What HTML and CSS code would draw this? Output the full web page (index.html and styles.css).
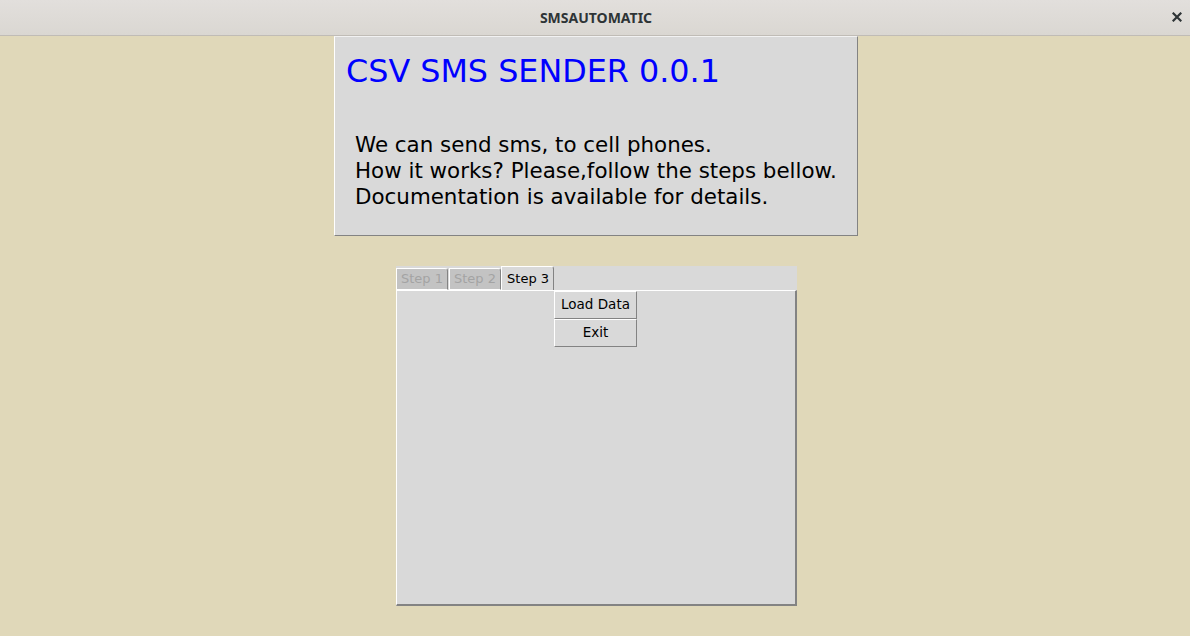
FILE: index.html
```html
<!DOCTYPE html>
<html>
<head>
<meta charset="utf-8">
<link rel="stylesheet" href="styles.css">
</head>
<body>
<div class="titlebar">
  <span class="title">SMSAUTOMATIC</span>
  <span class="close">
    <svg width="10" height="10" viewBox="0 0 10 10"><path d="M1.5 1.5 L8.5 8.5 M8.5 1.5 L1.5 8.5" stroke="#2e3436" stroke-width="2.2" stroke-linecap="square"/></svg>
  </span>
</div>
<div class="main">
  <div class="header">
    <div class="app-title">CSV SMS SENDER 0.0.1</div>
    <div class="desc">
      <div>We can send sms, to cell phones.</div>
      <div>How it works? Please,follow the steps bellow.</div>
      <div>Documentation is available for details.</div>
    </div>
  </div>
  <div class="notebook">
    <div class="tabs">
      <div class="tab disabled">Step 1</div>
      <div class="tab disabled">Step 2</div>
      <div class="tab selected">Step 3</div>
    </div>
    <div class="pane">
      <button class="btn">Load Data</button>
      <button class="btn">Exit</button>
    </div>
  </div>
</div>
</body>
</html>
```

FILE: styles.css
```css
html, body {
  margin: 0;
  padding: 0;
}
body {
  width: 1190px;
  height: 636px;
  background: #e0d8b9;
  font-family: "DejaVu Sans", sans-serif;
  overflow: hidden;
}
.titlebar {
  height: 35px;
  border-bottom: 1px solid #c0bcb6;
  background: linear-gradient(#e2dfdc, #dad7d2);
  display: flex;
  align-items: center;
  justify-content: center;
  position: relative;
}
.title {
  font-family: "Noto Sans", "DejaVu Sans", sans-serif;
  font-weight: bold;
  font-size: 14px;
  color: #2e3436;
  margin-left: 2px;
}
.close {
  position: absolute;
  right: 8px;
  top: 12px;
  width: 10px;
  height: 10px;
  display: flex;
}
.main {
  display: flex;
  flex-direction: column;
  align-items: center;
}
.header {
  box-sizing: border-box;
  width: 524px;
  height: 200px;
  background: #d9d9d9;
  border-top: 1px solid #f2f2f2;
  border-left: 1px solid #ffffff;
  border-right: 1px solid #838383;
  border-bottom: 1px solid #838383;
  padding: 0 0 0 11px;
  margin-left: 2px;
}
.app-title {
  color: #0000ff;
  font-size: 31.8px;
  line-height: 36px;
  margin-top: 16px;
  white-space: nowrap;
}
.desc {
  margin-top: 43px;
  margin-left: 9px;
  font-size: 21.4px;
  line-height: 26px;
  color: #000;
  white-space: nowrap;
}
.notebook {
  margin-top: 30px;
  width: 401px;
  margin-left: 3px;
  display: flex;
  flex-direction: column;
}
.tabs {
  height: 24px;
  background: #d9d9d9;
  display: flex;
  align-items: flex-end;
}
.tab {
  box-sizing: border-box;
  height: 23px;
  font-size: 13px;
  line-height: 22px;
  padding: 0 4px;
  border-left: 1px solid #ffffff;
  border-top: 1px solid #ffffff;
  border-right: 1px solid #838383;
  border-top-right-radius: 3px;
  margin-right: 1px;
  white-space: nowrap;
}
.tab.disabled {
  background: #c3c3c3;
  color: #a3a3a3;
  border-bottom: 1px solid #ffffff;
  height: 22px;
  line-height: 20px;
}
.tab.selected {
  background: #d9d9d9;
  color: #000;
  height: 24px;
  line-height: 23px;
  padding: 0 4px 0 5px;
  margin-left: -1px;
}
.pane {
  box-sizing: border-box;
  height: 316px;
  background: #d9d9d9;
  border-top: 1px solid #ffffff;
  border-left: 1px solid #ffffff;
  border-right: 2px solid #838383;
  border-bottom: 2px solid #838383;
  display: flex;
  flex-direction: column;
  align-items: center;
}
.btn {
  box-sizing: border-box;
  width: 83px;
  height: 28px;
  margin: 0 0 0 -1px;
  padding: 0 0 2px 0;
  font-family: "DejaVu Sans", sans-serif;
  font-size: 13.5px;
  color: #000;
  background: #d9d9d9;
  border-top: 1px solid #ffffff;
  border-left: 1px solid #ffffff;
  border-right: 1px solid #838383;
  border-bottom: 1px solid #838383;
  border-radius: 0;
}
```
